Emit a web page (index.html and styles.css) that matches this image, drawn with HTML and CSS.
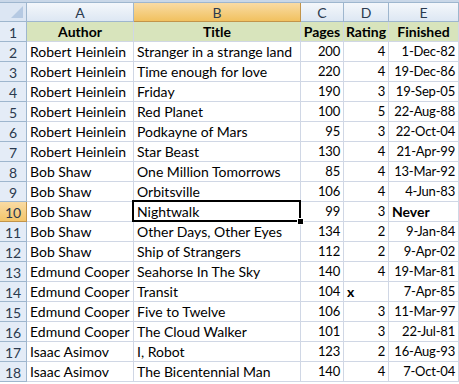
FILE: index.html
```html
<!DOCTYPE html>
<html>
<head>
<meta charset="utf-8">
<link rel="stylesheet" href="styles.css">
</head>
<body>
<div class="topstrip"></div>
<div class="sheet">
  <div class="hd corner"><span class="tri"></span></div>
  <div class="hd col">A</div>
  <div class="hd col sel">B</div>
  <div class="hd col">C</div>
  <div class="hd col">D</div>
  <div class="hd col">E</div>

  <div class="hd rn">1</div>
  <div class="c g b ctr">Author</div>
  <div class="c g b ctr">Title</div>
  <div class="c g b ctr">Pages</div>
  <div class="c g b ctr">Rating</div>
  <div class="c g b ctr">Finished</div>

  <div class="hd rn">2</div><div class="c">Robert Heinlein</div><div class="c">Stranger in a strange land</div><div class="c r">200</div><div class="c r">4</div><div class="c r">1-Dec-82</div>
  <div class="hd rn">3</div><div class="c">Robert Heinlein</div><div class="c">Time enough for love</div><div class="c r">220</div><div class="c r">4</div><div class="c r">19-Dec-86</div>
  <div class="hd rn">4</div><div class="c">Robert Heinlein</div><div class="c">Friday</div><div class="c r">190</div><div class="c r">3</div><div class="c r">19-Sep-05</div>
  <div class="hd rn">5</div><div class="c">Robert Heinlein</div><div class="c">Red Planet</div><div class="c r">100</div><div class="c r">5</div><div class="c r">22-Aug-88</div>
  <div class="hd rn">6</div><div class="c">Robert Heinlein</div><div class="c">Podkayne of Mars</div><div class="c r">95</div><div class="c r">3</div><div class="c r">22-Oct-04</div>
  <div class="hd rn">7</div><div class="c">Robert Heinlein</div><div class="c">Star Beast</div><div class="c r">130</div><div class="c r">4</div><div class="c r">21-Apr-99</div>
  <div class="hd rn">8</div><div class="c">Bob Shaw</div><div class="c">One Million Tomorrows</div><div class="c r">85</div><div class="c r">4</div><div class="c r">13-Mar-92</div>
  <div class="hd rn">9</div><div class="c">Bob Shaw</div><div class="c">Orbitsville</div><div class="c r">106</div><div class="c r">4</div><div class="c r">4-Jun-83</div>
  <div class="hd rn sel">10</div><div class="c">Bob Shaw</div><div class="c active">Nightwalk<span class="handle"></span></div><div class="c r">99</div><div class="c r">3</div><div class="c b">Never</div>
  <div class="hd rn">11</div><div class="c">Bob Shaw</div><div class="c">Other Days, Other Eyes</div><div class="c r">134</div><div class="c r">2</div><div class="c r">9-Jan-84</div>
  <div class="hd rn">12</div><div class="c">Bob Shaw</div><div class="c">Ship of Strangers</div><div class="c r">112</div><div class="c r">2</div><div class="c r">9-Apr-02</div>
  <div class="hd rn">13</div><div class="c">Edmund Cooper</div><div class="c">Seahorse In The Sky</div><div class="c r">140</div><div class="c r">4</div><div class="c r">19-Mar-81</div>
  <div class="hd rn">14</div><div class="c">Edmund Cooper</div><div class="c">Transit</div><div class="c r">104</div><div class="c b">x</div><div class="c r">7-Apr-85</div>
  <div class="hd rn">15</div><div class="c">Edmund Cooper</div><div class="c">Five to Twelve</div><div class="c r">106</div><div class="c r">3</div><div class="c r">11-Mar-97</div>
  <div class="hd rn">16</div><div class="c">Edmund Cooper</div><div class="c">The Cloud Walker</div><div class="c r">101</div><div class="c r">3</div><div class="c r">22-Jul-81</div>
  <div class="hd rn">17</div><div class="c">Isaac Asimov</div><div class="c">I, Robot</div><div class="c r">123</div><div class="c r">2</div><div class="c r">16-Aug-93</div>
  <div class="hd rn">18</div><div class="c">Isaac Asimov</div><div class="c">The Bicentennial Man</div><div class="c r">140</div><div class="c r">4</div><div class="c r">7-Oct-04</div>
</div>
</body>
</html>
```

FILE: styles.css
```css
html, body {
  margin: 0;
  padding: 0;
  background: #ffffff;
}
body {
  font-family: Lato, "Open Sans", sans-serif;
  font-size: 14px;
  color: #000;
  width: 459px;
  height: 384px;
  overflow: hidden;
}
.topstrip {
  height: 2px;
  background: #c9d7e8;
  border-bottom: 1px solid #9eb6ce;
}
.sheet {
  display: grid;
  grid-template-columns: 27px 107px 167px 43px 45px 70px;
  grid-template-rows: 19px repeat(18, 20px);
}
.hd {
  box-sizing: border-box;
  background: linear-gradient(#edf2f9, #dbe5f2);
  border-right: 1px solid #9eb6ce;
  border-bottom: 1px solid #9eb6ce;
  color: #2b3a4e;
  display: flex;
  align-items: center;
  justify-content: center;
  line-height: 1;
  padding-top: 1px;
}
.hd.col {
  background: linear-gradient(#f4f7fb, #dde7f3);
}
.hd.rn {
  background: #e4ecf7;
  padding-top: 2px;
}
.hd.sel {
  background: linear-gradient(#f9dba4, #f1c15f);
  border-color: #c2944a;
}
.hd.rn.sel {
  background: linear-gradient(#f9dba4, #f3c56a);
}
.corner {
  position: relative;
  background: #dce6f3;
}
.tri {
  position: absolute;
  right: 3px;
  bottom: 3px;
  width: 0;
  height: 0;
  border-left: 12px solid transparent;
  border-bottom: 12px solid #b5c9e2;
}
.c {
  box-sizing: border-box;
  border-right: 1px solid #d0d7e5;
  border-bottom: 1px solid #d0d7e5;
  padding: 0 3px;
  white-space: nowrap;
  overflow: hidden;
  display: flex;
  align-items: flex-end;
  padding-bottom: 1px;
  line-height: 17px;
}
.c.g {
  background: #d8e4bc;
}
.c.b {
  font-weight: bold;
}
.c.ctr {
  justify-content: center;
}
.c.r {
  justify-content: flex-end;
  font-size: 13px;
  letter-spacing: -0.2px;
}
.active {
  position: relative;
  overflow: visible;
}
.active::before {
  content: "";
  position: absolute;
  left: -2px;
  top: -2px;
  right: -1px;
  bottom: -1px;
  border: 2px solid #000;
}
.handle {
  position: absolute;
  right: -4px;
  bottom: -4px;
  width: 5px;
  height: 5px;
  background: #000;
  border: 1px solid #fff;
  z-index: 2;
}
```
